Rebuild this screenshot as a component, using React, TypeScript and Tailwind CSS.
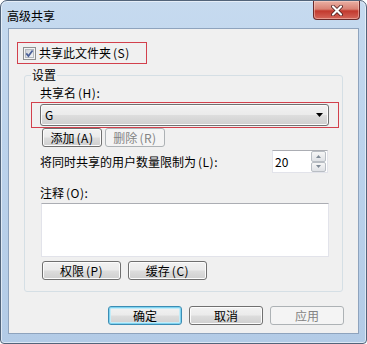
import React from "react";

const btnBase =
  "flex items-center justify-center rounded-[3px] border text-[12px] leading-[14px]";
const btnNormal =
  "border-[#707070] text-black bg-[linear-gradient(180deg,#f2f2f2_0%,#ebebeb_48%,#dddddd_52%,#cfcfcf_100%)] shadow-[inset_0_0_0_1px_#fcfcfc]";
const btnDisabled = "border-[#adb2b5] bg-[#f4f4f4] text-[#838383]";
const btnDefault =
  "border-[#3c8db4] text-black bg-[linear-gradient(180deg,#f2f2f2_0%,#ebebeb_48%,#dddddd_52%,#cfcfcf_100%)] shadow-[inset_0_0_0_1px_#7fd3f0,inset_0_0_0_2px_#c4ecf8]";

// access key, e.g. (S) — spaced a little like SimSun's half-width brackets
const Key = ({ k }: { k: string }) => (
  <span className="ml-[2px] tracking-[0.5px]">({k})</span>
);

const CheckBox = () => (
  <svg width="13" height="13" viewBox="0 0 13 13">
    <defs>
      <linearGradient id="cb" x1="0" y1="0" x2="1" y2="1">
        <stop offset="0" stopColor="#cbcfd5" />
        <stop offset="1" stopColor="#f6f6f6" />
      </linearGradient>
    </defs>
    <rect x="0.5" y="0.5" width="12" height="12" fill="#f4f4f4" stroke="#8e8f8f" />
    <rect x="2.5" y="2.5" width="8" height="8" fill="url(#cb)" stroke="#b4b9bf" />
    <path d="M3.3 6.4 L5.4 9 L9.6 3.4" fill="none" stroke="#4a5f97" strokeWidth="1.7" />
  </svg>
);

const CloseX = () => (
  <svg width="14" height="11" viewBox="0 0 14 11">
    <path d="M3 1.5 L11 9.5 M11 1.5 L3 9.5" stroke="#4a1c1c" strokeWidth="3.8" strokeLinecap="round" />
    <path d="M3 1.5 L11 9.5 M11 1.5 L3 9.5" stroke="#ffffff" strokeWidth="2.2" strokeLinecap="round" />
  </svg>
);

const SpinButton = ({ up }: { up?: boolean }) => (
  <div className="flex flex-1 items-center justify-center rounded-[2px] border border-[#b9bec4] bg-[linear-gradient(180deg,#f6f6f6_0%,#dfe2e6_100%)]">
    <svg width="5" height="3" viewBox="0 0 5 3">
      <path d={up ? "M0 3 L2.5 0 L5 3 Z" : "M0 0 L5 0 L2.5 3 Z"} fill="#7f8a96" />
    </svg>
  </div>
);

const App = () => {
  return (
    <div className="h-[344px] w-[367px] bg-white font-['Noto_Sans_CJK_SC',sans-serif] text-[12px] leading-[14px] text-black">
      <div className="flex h-full flex-col rounded-t-[7px] rounded-b-[4px] border border-[#52647a] bg-[linear-gradient(180deg,#c6daef_0%,#bcd3ec_40%,#b3cbe6_100%)] shadow-[inset_0_0_0_1px_rgba(255,255,255,0.55)]">
        {/* title bar */}
        <div className="flex h-[27px] items-start justify-between">
          <span className="pl-[6px] pt-[8px]">高级共享</span>
          <div className="mr-[6px] flex h-[19px] w-[47px] items-center justify-center rounded-b-[4px] border border-t-0 border-[#6b2a2a] bg-[linear-gradient(180deg,#eab0a4_0%,#d98274_45%,#c2392e_55%,#d4665a_100%)] shadow-[inset_0_0_0_1px_rgba(255,220,210,0.45)]">
            <CloseX />
          </div>
        </div>

        {/* client area */}
        <div className="mx-[7px] flex h-[306px] flex-col border border-[#8ea3bd] bg-[#f0f0f0]">
          <label className="ml-[8px] mt-[13px] flex h-[22px] w-[130px] items-center border border-[#d2404c] pl-[5px]">
            <CheckBox />
            <span className="ml-[3px]">
              共享此文件夹
              <Key k="S" />
            </span>
          </label>

          <fieldset className="mx-[15px] mt-[4px] rounded-[3px] border border-[#d5dfe5] pb-[11px] pl-[6px]">
            <legend className="px-px leading-[14px]">设置</legend>
            <div className="flex flex-col pl-[9px] pt-[4px]">
              <div>
                共享名
                <Key k="H" />:
              </div>

              <div className="relative mt-[4px] flex h-[22px] w-[289px] items-center rounded-[3px] border border-[#707070] bg-[linear-gradient(180deg,#f2f2f2_0%,#ebebeb_48%,#dddddd_52%,#cfcfcf_100%)] pl-[4px] shadow-[inset_0_0_0_1px_#fcfcfc]">
                <span>G</span>
                <svg className="ml-auto mr-[5px]" width="7" height="4" viewBox="0 0 7 4">
                  <path d="M0 0 L7 0 L3.5 4 Z" fill="#000" />
                </svg>
                <span className="absolute -bottom-[3px] -left-[10px] -right-[11px] -top-[3px] border border-[#d2404c]" />
              </div>

              <div className="ml-[2px] mt-[2px] flex gap-[3px]">
                <div className={`${btnBase} ${btnNormal} h-[19px] w-[60px]`}>
                  添加
                  <Key k="A" />
                </div>
                <div className={`${btnBase} ${btnDisabled} h-[19px] w-[60px]`}>
                  删除
                  <Key k="R" />
                </div>
              </div>

              <div className="mt-[3px] flex h-[23px] w-[288px] items-center justify-between">
                <span>
                  将同时共享的用户数量限制为
                  <Key k="L" />:
                </span>
                <div className="flex h-[23px] w-[56px] items-center border border-[#e2e3ea] border-t-[#abadb3] bg-white pl-[2px] pr-px">
                  <span className="flex-1">20</span>
                  <div className="flex h-[21px] w-[15px] flex-col">
                    <SpinButton up />
                    <SpinButton />
                  </div>
                </div>
              </div>

              <div className="mt-[13px]">
                注释
                <Key k="O" />:
              </div>
              <textarea
                readOnly
                className="ml-px mt-[3px] h-[54px] w-[288px] resize-none border border-[#e2e3ea] border-t-[#abadb3] bg-white outline-none"
              />

              <div className="ml-[2px] mt-[4px] flex gap-[7px]">
                <div className={`${btnBase} ${btnNormal} h-[19px] w-[79px]`}>
                  权限
                  <Key k="P" />
                </div>
                <div className={`${btnBase} ${btnNormal} h-[19px] w-[79px]`}>
                  缓存
                  <Key k="C" />
                </div>
              </div>
            </div>
          </fieldset>

          <div className="mr-[14px] mt-[14px] flex justify-end gap-[7px]">
            <div className={`${btnBase} ${btnDefault} h-[19px] w-[74px]`}>确定</div>
            <div className={`${btnBase} ${btnNormal} h-[19px] w-[74px]`}>取消</div>
            <div className={`${btnBase} ${btnDisabled} h-[19px] w-[74px]`}>应用</div>
          </div>
        </div>
      </div>
    </div>
  );
};

export default App;
